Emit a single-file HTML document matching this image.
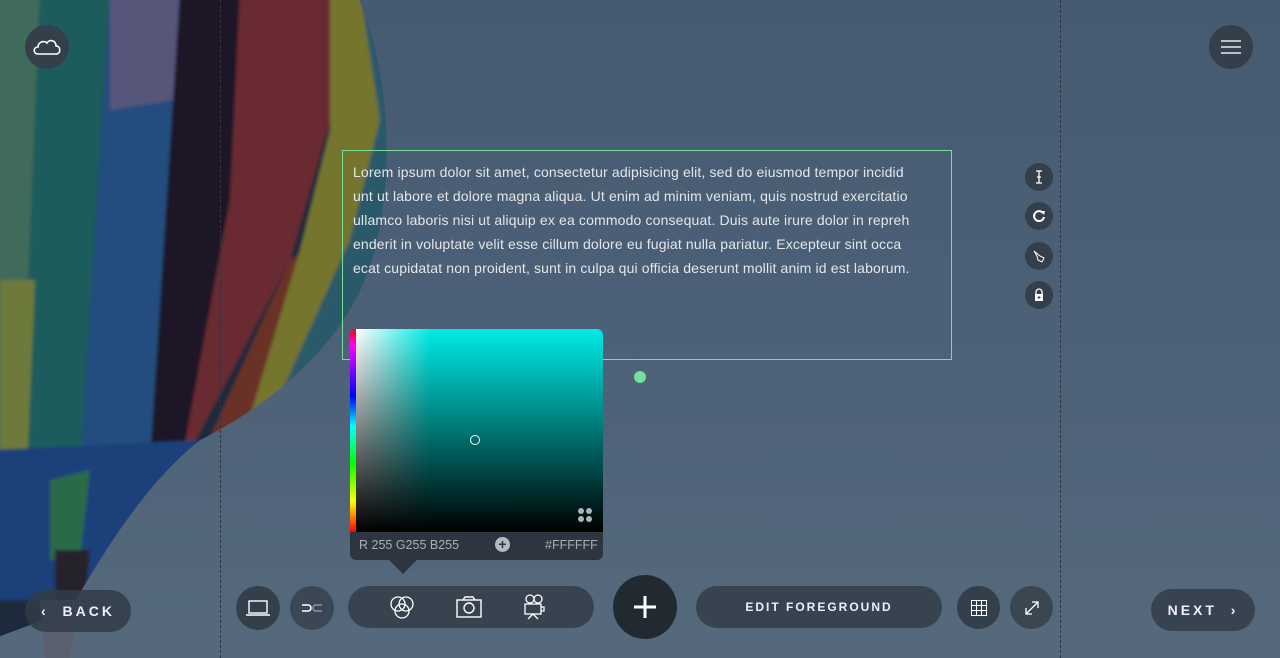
<!DOCTYPE html>
<html><head><meta charset="utf-8"><style>
*{margin:0;padding:0;box-sizing:border-box}
body{width:1280px;height:658px;overflow:hidden;position:relative;font-family:"Liberation Sans",sans-serif;background:linear-gradient(180deg,#465a71 0%,#4c6077 50%,#56697c 100%)}
.abs{position:absolute}
.circ{position:absolute;border-radius:50%;background:#333f4b;display:flex;align-items:center;justify-content:center}
.pill{position:absolute;border-radius:22px;background:#37434f;display:flex;align-items:center;justify-content:center;color:#eef;font-weight:bold;letter-spacing:3px}
.dash{position:absolute;top:0;height:658px;width:0;border-left:1px dashed #2b3440}
.txt{position:absolute;left:342px;top:150px;width:610px;height:210px;border:1px solid #79dd9a;padding:9px 10px;color:#e4e6ea;font-size:14px;line-height:24px;letter-spacing:.15px}
</style></head><body>
<svg class="abs" style="left:0;top:0" width="420" height="658" viewBox="0 0 420 658">
<defs><clipPath id="b"><path d="M-10,-10 L355,-10 C388,60 398,170 372,260 C345,350 260,410 200,440 C150,480 110,540 70,610 L-10,640 Z"/></clipPath>
<filter id="s"><feGaussianBlur stdDeviation="1.5"/></filter></defs>
<g clip-path="url(#b)" filter="url(#s)">
<rect x="-10" y="-10" width="430" height="660" fill="#1d2a3a"/>
<path d="M-10,-10 L40,-10 L20,500 L-10,500Z" fill="#3f6a5a"/>
<path d="M40,-10 L110,-10 L80,480 L20,480Z" fill="#1d5b5c"/>
<path d="M0,280 L35,280 L25,520 L0,520Z" fill="#6d7a3a"/>
<path d="M110,-10 L180,-10 L150,460 L80,470Z" fill="#214d7e"/>
<path d="M110,-10 L180,-10 L175,100 L110,110Z" fill="#56557a"/>
<path d="M180,-10 L240,-10 L230,200 L180,470 L150,470Z" fill="#1a1828"/>
<path d="M240,-10 L330,-10 L330,120 L290,260 L180,470 L230,200Z" fill="#6a2c30"/>
<path d="M290,260 L340,230 L250,450 L200,460Z" fill="#6a3028"/>
<path d="M330,-10 L360,-10 L380,120 L350,240 L260,440 L240,450 L300,250 L330,130Z" fill="#74742e"/>
<path d="M360,-10 L400,-10 L400,260 L330,340 L270,440 L260,440 L350,240 L380,120Z" fill="#2c5a6a"/>
<path d="M-10,450 L200,440 L140,520 L90,600 L-10,600Z" fill="#1d3f7a"/>
<path d="M50,480 L90,470 L80,560 L50,560Z" fill="#2a6a4a"/>
<path d="M55,550 L90,550 L85,600 L55,600Z" fill="#25202a"/>
</g>
<path d="M40,600 L80,600 L70,658 L45,658Z" fill="#5a6070"/>
</svg>
<div class="dash" style="left:220px"></div>
<div class="dash" style="left:1060px"></div>

<div class="circ" style="left:25px;top:25px;width:44px;height:44px"><svg width="30" height="20" viewBox="0 0 30 20"><path d="M6,17 C1,17 1,10 6,10 C6,5 12,3 15,6 C17,2 24,3 24,9 C29,9 29,17 24,17 Z" fill="none" stroke="#fff" stroke-width="1.6"/></svg></div>
<div class="circ" style="left:1209px;top:25px;width:44px;height:44px"><svg width="22" height="16"><path d="M1,2H21M1,8H21M1,14H21" stroke="#e8ecf0" stroke-width="1.6"/></svg></div>

<div class="txt">Lorem ipsum dolor sit amet, consectetur adipisicing elit, sed do eiusmod tempor incidid<br>unt ut labore et dolore magna aliqua. Ut enim ad minim veniam, quis nostrud exercitatio<br>ullamco laboris nisi ut aliquip ex ea commodo consequat. Duis aute irure dolor in repreh<br>enderit in voluptate velit esse cillum dolore eu fugiat nulla pariatur. Excepteur sint occa<br>ecat cupidatat non proident, sunt in culpa qui officia deserunt mollit anim id est laborum.</div>

<div class="circ" style="left:1025px;top:163px;width:28px;height:28px"><svg width="10" height="14"><path d="M2,1H8M5,1V13M2,13H8M3,7H7" stroke="#fff" stroke-width="1.3"/></svg></div>
<div class="circ" style="left:1025px;top:202px;width:28px;height:28px"><svg width="14" height="14"><path d="M11,4 A5,5 0 1 0 12,8" fill="none" stroke="#fff" stroke-width="2"/><path d="M9,2 L13,2 L12,6Z" fill="#fff"/></svg></div>
<div class="circ" style="left:1025px;top:242px;width:28px;height:28px"><svg width="14" height="14"><path d="M2,2 L8,7 L12,9 L10,13 L6,11 L5,7Z" fill="none" stroke="#fff" stroke-width="1"/></svg></div>
<div class="circ" style="left:1025px;top:281px;width:28px;height:28px"><svg width="12" height="14"><path d="M3,6V4A3,3 0 0 1 9,4V6" fill="none" stroke="#fff" stroke-width="1.3"/><rect x="2" y="6" width="8" height="7" fill="#fff"/><path d="M6,8V11M4.5,9.5H7.5" stroke="#333f4b" stroke-width="1"/></svg></div>

<div class="abs" style="left:634px;top:371px;width:12px;height:12px;border-radius:50%;background:#74e09a"></div>

<div class="abs" style="left:350px;top:329px;width:253px;height:231px;border-radius:6px;overflow:hidden;background:#2d3540">
<div class="abs" style="left:0;top:0;width:6px;height:203px;background:linear-gradient(#f00,#f0f 8%,#00f 33%,#0ff 48%,#0f0 66%,#ff0 85%,#f00)"></div>
<div class="abs" style="left:6px;top:0;width:247px;height:203px;background:linear-gradient(to bottom,transparent,#000),linear-gradient(to right,#fff,#00ebe6 30%,#00ebe6)"></div>
<div class="abs" style="left:120px;top:106px;width:10px;height:10px;border:1px solid #fff;border-radius:50%"></div>
<svg class="abs" style="left:227px;top:178px" width="16" height="16"><circle cx="4" cy="4" r="3" fill="#aeb4bc"/><circle cx="12" cy="4" r="3" fill="#aeb4bc"/><circle cx="4" cy="12" r="3" fill="#aeb4bc"/><circle cx="12" cy="12" r="3" fill="#aeb4bc"/></svg>
<div class="abs" style="left:9px;top:209px;font-size:12.5px;color:#a8aeb6">R 255 G255 B255</div>
<div class="abs" style="left:195px;top:209px;font-size:12.5px;color:#a8aeb6">#FFFFFF</div>
<div class="abs" style="left:145px;top:208px;width:15px;height:15px;border-radius:50%;background:#b4bac2;color:#2d3540;font-size:14px;line-height:14px;text-align:center;font-weight:bold">+</div>
</div>
<div class="abs" style="left:389px;top:560px;width:0;height:0;border-left:14px solid transparent;border-right:14px solid transparent;border-top:14px solid #2d3540"></div>

<div class="pill" style="left:25px;top:590px;width:106px;height:42px;border-radius:21px;background:rgba(50,60,72,.85);font-size:14px">‹&nbsp; BACK</div>
<div class="circ" style="left:236px;top:586px;width:44px;height:44px"><svg width="24" height="16"><rect x="3" y="1" width="18" height="12" fill="none" stroke="#fff" stroke-width="1.4"/><path d="M0,15H24" stroke="#fff" stroke-width="1.4"/></svg></div>
<div class="circ" style="left:290px;top:586px;width:44px;height:44px;background:#3b4754"><svg width="26" height="12"><path d="M3,3H9A3,3 0 0 1 9,9H3" fill="none" stroke="#fff" stroke-width="1.6"/><path d="M23,3H17A3,3 0 0 0 17,9H23" fill="none" stroke="#8a949e" stroke-width="1.6"/></svg></div>
<div class="pill" style="left:348px;top:586px;width:246px;height:42px;border-radius:21px">
<svg class="abs" style="left:40px;top:8px" width="28" height="28"><circle cx="10" cy="10" r="7" fill="none" stroke="#fff" stroke-width="1.3"/><circle cx="18" cy="10" r="7" fill="none" stroke="#fff" stroke-width="1.3"/><circle cx="14" cy="17" r="7" fill="none" stroke="#fff" stroke-width="1.3"/></svg>
<svg class="abs" style="left:107px;top:9px" width="28" height="24"><rect x="2" y="5" width="24" height="17" fill="none" stroke="#fff" stroke-width="1.4"/><path d="M8,5 L10,2 H18 L20,5" fill="none" stroke="#fff" stroke-width="1.4"/><circle cx="14" cy="13" r="5" fill="none" stroke="#fff" stroke-width="1.4"/></svg>
<svg class="abs" style="left:174px;top:7px" width="26" height="28"><circle cx="8" cy="6" r="4" fill="none" stroke="#fff" stroke-width="1.3"/><circle cx="16" cy="6" r="4" fill="none" stroke="#fff" stroke-width="1.3"/><rect x="3" y="11" width="16" height="10" fill="none" stroke="#fff" stroke-width="1.3"/><path d="M19,14H22V18H19M11,21L6,26M11,21L16,26" fill="none" stroke="#fff" stroke-width="1.3"/></svg>
</div>
<div class="circ" style="left:613px;top:575px;width:64px;height:64px;background:#222a31"><svg width="22" height="22"><path d="M11,0V22M0,11H22" stroke="#fff" stroke-width="3"/></svg></div>
<div class="pill" style="left:696px;top:586px;width:246px;height:42px;border-radius:21px;font-size:12px;letter-spacing:2px">EDIT FOREGROUND</div>
<div class="circ" style="left:957px;top:586px;width:43px;height:43px"><svg width="16" height="16"><path d="M.5,.5H15.5V15.5H.5ZM5.5,0V16M10.5,0V16M0,5.5H16M0,10.5H16" fill="none" stroke="#fff" stroke-width="1"/></svg></div>
<div class="circ" style="left:1010px;top:586px;width:43px;height:43px;background:#3b4652"><svg width="16" height="16"><path d="M2,14L14,2M8,2H14V8M2,8V14H8" fill="none" stroke="#fff" stroke-width="1.3"/></svg></div>
<div class="pill" style="left:1151px;top:589px;width:104px;height:42px;border-radius:21px;font-size:14px">NEXT &nbsp;›</div>
</body></html>
